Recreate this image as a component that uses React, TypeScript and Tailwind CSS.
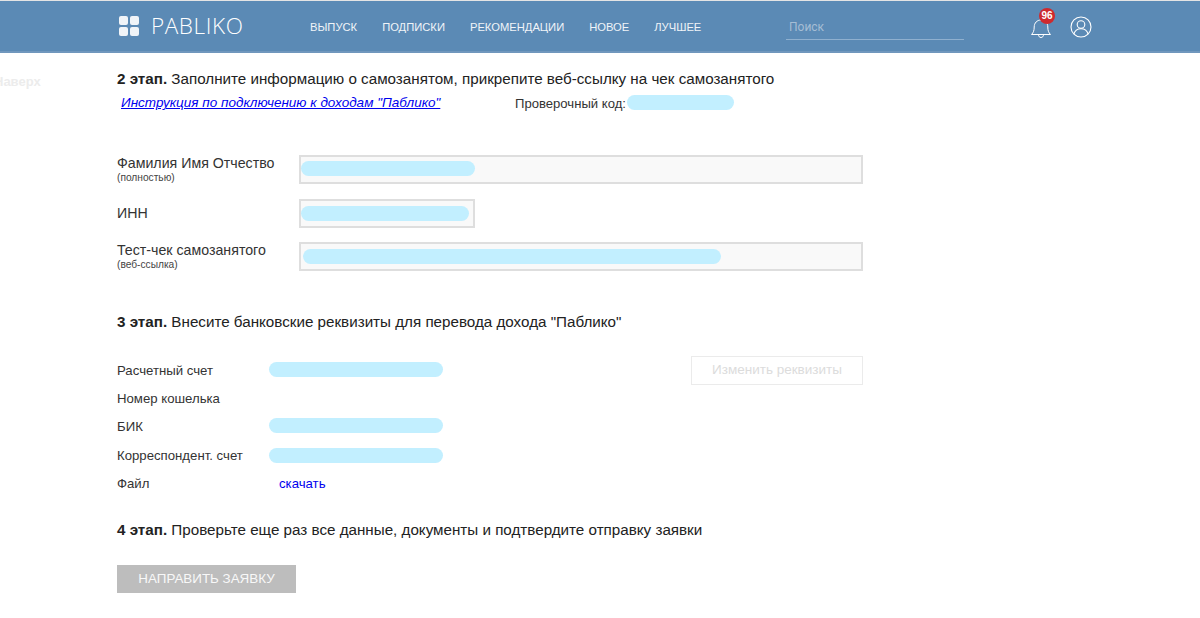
import React from 'react';

const navItems = ['ВЫПУСК', 'ПОДПИСКИ', 'РЕКОМЕНДАЦИИ', 'НОВОЕ', 'ЛУЧШЕЕ'];

const Blur = ({ className }: { className: string }) => (
  <div className={`rounded-full bg-[#c2efff] ${className}`} />
);

const Header = () => (
  <header className="h-[53px] border-t border-t-[#e4e4e4] border-b-2 border-b-[#7097bd] bg-[#5b8ab5] flex items-center pl-[119px]">
    <div className="grid grid-cols-2 gap-[2px] w-[20px] h-[20px]">
      <span className="rounded-[2px] bg-[#f0f4f8]" />
      <span className="rounded-[2px] bg-[#f0f4f8]" />
      <span className="rounded-[2px] bg-[#f0f4f8]" />
      <span className="rounded-[2px] bg-[#f0f4f8]" />
    </div>
    <div className="ml-[12px] w-[92px] text-[22.500px] leading-none tracking-[0.6px] text-white font-['Open_Sans',sans-serif] font-light">PABLIKO</div>
    <nav className="ml-[67px] w-[476px] mt-[2px] flex gap-[25px] text-[11.2px] text-[#f0f4f8] font-['Liberation_Sans',sans-serif]">
      {navItems.map((item) => (
        <a key={item}>{item}</a>
      ))}
    </nav>
    <div className="w-[178px] h-[26px] mt-[1px] border-b border-[#8fb0cf] pl-[3px] text-[12px] leading-[26px] text-[#a5bdd4] font-['Roboto',sans-serif]">Поиск</div>
    <div className="relative ml-[66px] w-[22px] h-[24px] mt-[2px]">
      <svg width="22" height="24" viewBox="0 0 22 24" fill="none" stroke="#fff" strokeWidth="1" strokeLinejoin="round">
        <path d="M1.500 19.500c2-2 2.700-4 2.700-7.500 0-4 2.800-7 6.800-7s6.800 3 6.800 7c0 3.500.7 5.500 2.700 7.500z" />
        <path d="M8.500 19.500c0 2 1.100 3 2.500 3s2.500-1 2.500-3" />
      </svg>
      <span className="absolute left-[9px] top-[-7px] w-[16px] h-[16px] rounded-full bg-[#cf2a2e] text-white text-[10px] font-bold leading-[16px] text-center font-['Liberation_Sans',sans-serif]">96</span>
    </div>
    <svg className="ml-[18px] mt-[1px]" width="22" height="22" viewBox="0 0 22 22" fill="none" stroke="#fff" strokeWidth="1.100">
      <circle cx="11" cy="11" r="10" />
      <circle cx="11" cy="8.500" r="3.800" />
      <path d="M4 18c.8-3.500 3.500-5.300 7-5.300s6.200 1.800 7 5.300" />
    </svg>
  </header>
);

const Field = ({ label, hint, box, blur }: { label: string; hint?: string; box: string; blur: string }) => (
  <div className="flex items-start">
    <div className={`w-[182px] ${hint ? '' : 'pt-[6px]'}`}>
      <div className="text-[14.2px] leading-[16px] text-[#333]">{label}</div>
      {hint && <div className="text-[10.2px] leading-[11px] mt-[1px] text-[#444]">{hint}</div>}
    </div>
    <div className={`border-2 border-[#dedede] bg-[#f9f9f9] ${box}`}>
      <Blur className={blur} />
    </div>
  </div>
);

const Req = ({ label, children }: { label: string; children?: React.ReactNode }) => (
  <div className="flex items-center h-[28.300px] text-[13.200px] text-[#333]">
    <div className="w-[152px]">{label}</div>
    {children}
  </div>
);

export default function App() {
  return (
    <div className="relative h-[618px] overflow-hidden bg-white font-['Liberation_Sans',sans-serif]">
      <Header />
      <div className="absolute left-[-6px] top-[72px] text-[13px] font-bold text-[#ececec]">Наверх</div>
      <main className="pl-[117px] pt-[17px]">
        <p className="text-[15.200px] leading-[18px] text-[#222]"><b>2 этап.</b> Заполните информацию о самозанятом, прикрепите веб-ссылку на чек самозанятого</p>
        <div className="flex items-center mt-[6px] ml-[4px] h-[18px]">
          <a className="w-[394px] pt-[1px] text-[13.500px] italic underline text-[#0000ee]">Инструкция по подключению к доходам "Паблико"</a>
          <span className="pt-[1px] text-[13.100px] text-[#333]">Проверочный код:</span>
          <Blur className="w-[107px] h-[15px] ml-[1px] -mt-[2px]" />
        </div>
        <div className="flex flex-col gap-[14.500px] mt-[43px]">
          <Field label="Фамилия Имя Отчество" hint="(полностью)" box="w-[564px] h-[29px] pt-[4px]" blur="w-[174px] h-[15px]" />
          <Field label="ИНН" box="w-[176px] h-[29px] pt-[5px]" blur="w-[168px] h-[15px]" />
          <Field label="Тест-чек самозанятого" hint="(веб-ссылка)" box="w-[564px] h-[29px] pt-[5px] pl-[2px]" blur="w-[418px] h-[15px]" />
        </div>
        <p className="mt-[42px] text-[15.200px] leading-[18px] text-[#222]"><b>3 этап.</b> Внесите банковские реквизиты для перевода дохода "Паблико"</p>
        <div className="flex mt-[25.500px]">
          <div className="w-[574px]">
            <Req label="Расчетный счет"><Blur className="w-[174px] h-[15px] -mt-[3px]" /></Req>
            <Req label="Номер кошелька" />
            <Req label="БИК"><Blur className="w-[174px] h-[15px] -mt-[3px]" /></Req>
            <Req label="Корреспондент. счет"><Blur className="w-[174px] h-[15px] -mt-[1px]" /></Req>
            <Req label="Файл"><a className="ml-[10px] text-[#0000ee]">скачать</a></Req>
          </div>
          <button className="w-[172px] h-[29px] -mt-[1px] border border-[#ebebeb] text-[13.500px] text-[#dcdcdc]">Изменить реквизиты</button>
        </div>
        <p className="mt-[23.500px] text-[15.200px] leading-[18px] text-[#222]"><b>4 этап.</b> Проверьте еще раз все данные, документы и подтвердите отправку заявки</p>
        <button className="block mt-[26px] w-[179px] h-[28px] bg-[#bdbdbd] text-[13.400px] text-[#f8f8f8]">НАПРАВИТЬ ЗАЯВКУ</button>
      </main>
    </div>
  );
}
